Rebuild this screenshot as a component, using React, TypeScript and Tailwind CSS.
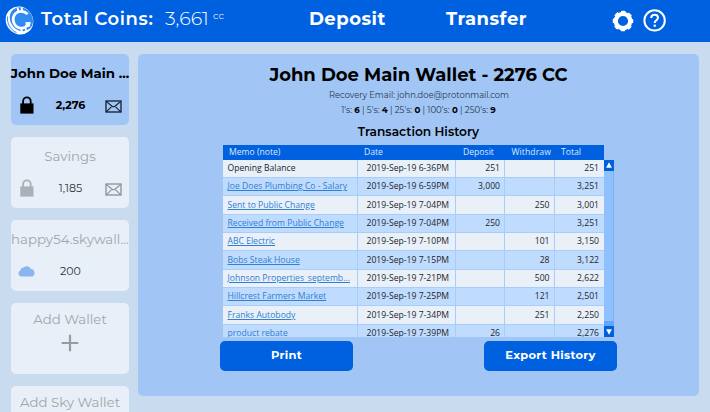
import { clsx } from "clsx";

type Transaction = {
  memo: string;
  date: string;
  deposit?: string;
  withdraw?: string;
  total: string;
};

const transactions: Transaction[] = [
  { memo: "Opening Balance", date: "2019-Sep-19 6-36PM", deposit: "251", total: "251" },
  { memo: "Joe Does Plumbing Co - Salary", date: "2019-Sep-19 6-59PM", deposit: "3,000", total: "3,251" },
  { memo: "Sent to Public Change", date: "2019-Sep-19 7-04PM", withdraw: "250", total: "3,001" },
  { memo: "Received from Public Change", date: "2019-Sep-19 7-04PM", deposit: "250", total: "3,251" },
  { memo: "ABC Electric", date: "2019-Sep-19 7-10PM", withdraw: "101", total: "3,150" },
  { memo: "Bobs Steak House", date: "2019-Sep-19 7-15PM", withdraw: "28", total: "3,122" },
  { memo: "Johnson Properties_septemb...", date: "2019-Sep-19 7-21PM", withdraw: "500", total: "2,622" },
  { memo: "Hillcrest Farmers Market", date: "2019-Sep-19 7-25PM", withdraw: "121", total: "2,501" },
  { memo: "Franks Autobody", date: "2019-Sep-19 7-34PM", withdraw: "251", total: "2,250" },
  { memo: "product rebate", date: "2019-Sep-19 7-39PM", deposit: "26", total: "2,276" },
];

const columns = "grid grid-cols-[134.5px_98.5px_49px_50px_49px]";

function Logo() {
  return (
    <svg viewBox="0 0 30 30" className="h-[30px] w-[30px]" fill="none">
      <ellipse cx="14.5" cy="14.5" rx="13.4" ry="14.4" fill="#fff" transform="rotate(-40 14.5 14.5)" />
      <ellipse cx="16.4" cy="13.2" rx="11" ry="12.6" fill="#2f8bef" transform="rotate(-40 16.4 13.2)" />
      <path d="M2.6 10.5C1.6 16.5 5.2 23.8 11.5 26.6" stroke="#2f8bef" strokeWidth="1" />
      <path
        d="M22.6 8.2C19.6 5 13.6 4.3 10.4 7.6 6.6 11.6 8 18 12 20.8c3.6 2.5 9 1.7 10.8-3.2"
        stroke="#fff"
        strokeWidth="2.7"
      />
      <path d="M12.6 1.6l.7 3.6M16.6 1.4l.6 3.4M16.4 22.6l.6 4.4M20.4 21.6l.8 4" stroke="#fff" strokeWidth="1.9" />
      <path d="M20.4 16.2l5.4-.3-1 4.6-3.5 1z" fill="#fff" />
    </svg>
  );
}

function GearIcon() {
  return (
    <svg viewBox="0 0 22 22" className="h-[22px] w-[22px]" fill="none">
      <circle cx="11" cy="11" r="7.2" stroke="#fff" strokeWidth="4.2" />
      <circle cx="11" cy="11" r="9.1" stroke="#fff" strokeWidth="2.4" strokeDasharray="4.3 2.846" strokeDashoffset="2.15" />
    </svg>
  );
}

function HelpIcon() {
  return (
    <svg viewBox="0 0 24 24" className="h-6 w-6" fill="none" stroke="#fff">
      <circle cx="11.6" cy="11.4" r="10.2" strokeWidth="2" />
      <path d="M8.2 9C8.3 7 9.6 5.8 11.6 5.8c2.1 0 3.4 1.1 3.4 2.9 0 2.3-3.3 2.7-3.3 5.3" strokeWidth="2" />
      <path d="M11.7 15.6v2.2" strokeWidth="2.2" />
    </svg>
  );
}

function LockIcon() {
  return (
    <svg viewBox="0 0 14 18" className="h-[18px] w-[14px]" fill="none">
      <path d="M3.1 8V5.2a3.8 3.9 0 0 1 7.6 0V8" stroke="currentColor" strokeWidth="1.8" />
      <rect x=".3" y="7.4" width="13.2" height="10.2" fill="currentColor" />
    </svg>
  );
}

function MailIcon() {
  return (
    <svg viewBox="0 0 17 13" className="h-[13px] w-[17px]" fill="none" stroke="currentColor">
      <rect x="1" y="1" width="15" height="11" strokeWidth="1.3" />
      <path d="M1.2 1.3l5.9 4.9q1.4 1.1 2.8 0L15.8 1.3M1.2 11.8l5.2-5M15.8 11.8l-5.2-5" strokeWidth="1.1" />
    </svg>
  );
}

function CloudIcon() {
  return (
    <svg viewBox="0 0 17 11" className="h-[11px] w-[17px]" fill="#8ab5f0">
      <path d="M3.4 10.6A3.2 3.2 0 0 1 2.5 4.4 3 3 0 0 1 5.6 1.5C7.8-.6 12 .2 12.8 3c2.2-.3 3.7 1.7 3.7 3.9 0 2.1-1.4 3.7-3.4 3.7z" />
    </svg>
  );
}

type WalletProps = {
  name: string;
  amount: string;
  active?: boolean;
  sky?: boolean;
};

function WalletCard({ name, amount, active, sky }: WalletProps) {
  return (
    <button
      type="button"
      className={clsx(
        "flex h-[71px] w-[118px] shrink-0 flex-col rounded-[5px]",
        active ? "bg-[#a1c6f5] text-black" : "bg-[#e8eff8] text-[#a3a5a8]",
      )}
    >
      <div
        className={clsx(
          "flex h-[39px] w-full items-center justify-center whitespace-nowrap text-[13.33px]",
          active && "font-bold",
        )}
      >
        {name}
      </div>
      <div className="grid h-[24px] w-full grid-cols-[31px_1fr_31px] items-center">
        <span className={clsx("flex justify-center", active ? "text-black" : "text-[#abb0b8]")}>
          {sky ? <CloudIcon /> : <LockIcon />}
        </span>
        <span className={clsx("pl-px text-[11px]", active ? "font-bold text-black" : "text-[#30343a]")}>{amount}</span>
        <span className={clsx("flex justify-center pt-[2px]", active ? "text-[#111c2a]" : "text-[#8c9095]")}>
          {!sky && <MailIcon />}
        </span>
      </div>
    </button>
  );
}

function TransactionTable() {
  return (
    <div className="ml-[85px] mt-[4.5px] w-[391px] font-['Open_Sans','Noto_Sans',sans-serif] text-[8.62px] leading-none">
      <div className={clsx(columns, "h-[15px] w-[381px] items-center bg-[#0061e0] text-[#dce9fb]")}>
        <span className="pl-[6px]">Memo (note)</span>
        <span className="pl-[6.5px]">Date</span>
        <span className="pl-[7px]">Deposit</span>
        <span className="pl-[6.5px] tracking-[0.1px]">Withdraw</span>
        <span className="pl-[6px]">Total</span>
      </div>
      <div className="flex h-[177.5px] overflow-hidden">
        <div className="w-[381px]">
          {transactions.map((t, i) => (
            <div
              key={t.memo}
              className={clsx(
                columns,
                "h-[18.36px] border-b border-[#a8cdf8] text-[#22262c] *:flex *:items-center",
                i % 2 ? "bg-[#bfdbfe]" : "bg-[#e9f0f8]",
              )}
            >
              <span className="border-r border-[#a8cdf8] pl-[4.5px]">
                <span className={clsx("whitespace-nowrap", i > 0 && "text-[#2f7fd3] underline")}>{t.memo}</span>
              </span>
              <span className="whitespace-nowrap border-r border-[#a8cdf8] pl-[9px]">{t.date}</span>
              <span className="justify-end border-r border-[#a8cdf8] pr-[4px]">{t.deposit}</span>
              <span className="justify-end border-r border-[#a8cdf8] pr-[4.5px]">{t.withdraw}</span>
              <span className="justify-end pr-[5px]">{t.total}</span>
            </div>
          ))}
        </div>
        <div className="flex w-[10px] flex-col justify-between border-r border-[#75b0ff] bg-[#91c0ff]">
          <div className="flex h-[11px] w-[10px] items-center justify-center bg-[#0061e0]">
            <svg viewBox="0 0 6 6" className="h-[6px] w-[6px]" fill="#fff">
              <path d="M3 .2L5.9 5.8H.1z" />
            </svg>
          </div>
          <div className="w-[10px] border-t-[5px] border-[#61a7ff]">
            <div className="flex h-[11px] items-center justify-center bg-[#0061e0]">
              <svg viewBox="0 0 6 6" className="h-[6px] w-[6px]" fill="#fff">
                <path d="M.1 .2h5.8L3 5.8z" />
              </svg>
            </div>
          </div>
        </div>
      </div>
    </div>
  );
}

export default function App() {
  return (
    <div className="flex h-[412px] w-[710px] flex-col overflow-hidden bg-[#c9dbee] font-['Montserrat','Inter',sans-serif]">
      <header className="flex h-[42px] shrink-0 items-center bg-[#0061e0] pb-[3px] text-white">
        <div className="ml-[5px] pt-[3px]">
          <Logo />
        </div>
        <span className="ml-[6px] w-[124px] whitespace-nowrap text-[18px] font-semibold tracking-[0.6px]">
          Total Coins:
        </span>
        <span className="w-[48px] text-[19px] font-light">3,661</span>
        <span className="w-[96px] pb-[7px] text-[10px] font-light leading-none">cc</span>
        <span className="w-[137px] text-[18px] font-bold tracking-[0.5px]">Deposit</span>
        <span className="w-[166px] text-[18px] font-bold tracking-[0.5px]">Transfer</span>
        <div className="flex items-center gap-[9px] pt-[3px]">
          <GearIcon />
          <HelpIcon />
        </div>
      </header>

      <div className="flex min-h-0 flex-1 pl-[11px] pt-3">
        <nav className="flex flex-col gap-3">
          <WalletCard name="John Doe Main ..." amount="2,276" active />
          <WalletCard name="Savings" amount="1,185" />
          <WalletCard name="happy54.skywall..." amount="200" sky />
          <button
            type="button"
            className="flex h-[71px] w-[118px] shrink-0 flex-col items-center rounded-[5px] bg-[#e8eff8] pt-[6px] text-[13.33px] leading-5 text-[#a3a5a8]"
          >
            Add Wallet
            <svg viewBox="0 0 18 18" className="mt-[5px] h-[18px] w-[18px]" stroke="#999b9e" strokeWidth="2.2">
              <path d="M9 .7v16.6M.7 9h16.6" />
            </svg>
          </button>
          <button
            type="button"
            className="flex h-[71px] w-[118px] shrink-0 flex-col items-center whitespace-nowrap rounded-[5px] bg-[#e8eff8] pt-[6px] text-[13.33px] leading-5 text-[#a3a5a8]"
          >
            Add Sky Wallet
          </button>
        </nav>

        <main className="ml-[9px] h-[342px] w-[561px] rounded-[5px] bg-[#a1c6f5]">
          <h1 className="pt-[9px] text-center text-[18px] font-bold leading-6">John Doe Main Wallet - 2276 CC</h1>
          <p className="mt-[2px] pl-px text-center text-[8.35px] leading-[12px] text-[#26364c]">
            Recovery Email: john.doe@protonmail.com
          </p>
          <p className="mt-[3px] text-center text-[8.6px] leading-[12px] text-[#26364c] [&_b]:text-black">
            1's: <b>6</b> | 5's: <b>4</b> | 25's: <b>0</b> | 100's: <b>0</b> | 250's: <b>9</b>
          </p>
          <h2 className="mt-[8px] text-center text-[12.2px] font-semibold leading-[16px]">Transaction History</h2>
          <TransactionTable />
          <div className="ml-[82px] mt-1 flex w-[397px] justify-between text-[11.5px] font-bold text-white">
            <button type="button" className="h-[30px] w-[133px] rounded-[5px] bg-[#0061e0] tracking-[0.3px]">
              Print
            </button>
            <button type="button" className="h-[30px] w-[133px] rounded-[5px] bg-[#0061e0] tracking-[0.3px]">
              Export History
            </button>
          </div>
        </main>
      </div>
    </div>
  );
}
